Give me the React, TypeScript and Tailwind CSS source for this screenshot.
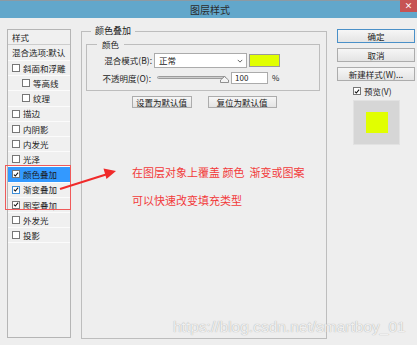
import React from 'react';

const CJK = "font-['Noto_Sans_CJK_SC','Noto_Sans',sans-serif]";

function Check({ checked, hover }: { checked?: boolean; hover?: boolean }) {
  return (
    <span
      className={`flex h-[8px] w-[8px] shrink-0 items-center justify-center border bg-white ${
        hover ? 'border-[#3c8ed8]' : 'border-[#767676]'
      }`}
    >
      {checked && (
        <svg viewBox="0 0 8 8" className="h-[7px] w-[7px]">
          <path d="M1.2 4.2 L3.1 6 L6.8 1.6" fill="none" stroke="#111" strokeWidth="1.4" />
        </svg>
      )}
    </span>
  );
}

const ROWS: { label: string; indent?: boolean; checked?: boolean; selected?: boolean; hover?: boolean }[] = [
  { label: '斜面和浮雕' },
  { label: '等高线', indent: true },
  { label: '纹理', indent: true },
  { label: '描边' },
  { label: '内阴影' },
  { label: '内发光' },
  { label: '光泽' },
  { label: '颜色叠加', checked: true, selected: true },
  { label: '渐变叠加', checked: true, hover: true },
  { label: '图案叠加', checked: true },
  { label: '外发光' },
  { label: '投影' },
];

function Btn({ children, w, primary }: { children: React.ReactNode; w: string; primary?: boolean }) {
  return (
    <div
      className={`flex items-center justify-center border bg-gradient-to-b from-[#f6f6f6] to-[#e4e4e4] text-[8.5px] leading-none text-[#222] ${w} ${
        primary ? 'border-[#4a90c8]' : 'border-[#acacac]'
      }`}
    >
      {children}
    </div>
  );
}

export default function App() {
  return (
    <div className={`relative h-[345px] w-[417px] overflow-hidden bg-[#eeeeee] text-[#1c1c1c] ${CJK}`}>
      {/* title bar */}
      <div className="relative flex h-[18px] items-center justify-center border-t border-[#8c9aa3] bg-[#62a7cb]">
        <span className="pl-[3px] text-[10px] leading-none text-[#2b2b2b]">图层样式</span>
        <div className="absolute right-0 top-[-1px] flex h-[12px] w-[17px] items-center justify-center bg-[#c75353] text-[8px] font-bold leading-none text-white">
          ×
        </div>
      </div>

      <div className="flex items-start pl-[7px] pt-[7px]">
        {/* left style list */}
        <div className="mt-[4px] flex h-[309px] w-[64px] flex-col border border-[#b5b5b5] bg-[#f0f0f0] text-[8.5px]">
          <div className="h-[15px] border-b border-[#cdcdcd] pl-[4px] leading-[14px]">样式</div>
          <div className="h-[16px] border-b border-[#fbfbfb] pl-[4px] leading-[15px]">混合选项:默认</div>
          {ROWS.map((r) => (
            <div
              key={r.label}
              className={`flex h-[15.2px] items-center gap-[3px] border-b border-[#fbfbfb] ${r.indent ? 'pl-[14px]' : 'pl-[4px]'} ${
                r.selected ? 'bg-[#3399ff]' : ''
              }`}
            >
              <Check checked={r.checked} hover={r.hover} />
              <span className="leading-none">{r.label}</span>
            </div>
          ))}
        </div>

        {/* main group */}
        <fieldset className="ml-[10px] h-[314px] w-[246px] border border-[#bdbdbd]">
          <legend className="ml-[9px] px-[4px] text-[9px] leading-[12px]">颜色叠加</legend>

          <fieldset className="ml-[4px] mr-[6px] mt-[1px] h-[53px] border border-[#bdbdbd]">
            <legend className="ml-[10px] px-[5px] text-[8.5px] leading-[12px]">颜色</legend>
            <div className="mt-[3px] flex h-[15px] items-center text-[8.5px]">
              <span className="w-[65px] text-right leading-none">混合模式(B):</span>
              <div className="ml-[2px] flex h-[15px] w-[93px] items-center justify-between border border-[#ababab] bg-white pl-[4px] pr-[3px]">
                <span className="leading-none">正常</span>
                <svg viewBox="0 0 8 5" className="h-[4px] w-[6px]">
                  <path d="M1 1 L4 4 L7 1" fill="none" stroke="#555" strokeWidth="1.2" />
                </svg>
              </div>
              <div className="ml-[2px] h-[13px] w-[31px] border border-[#9a9a9a] bg-[#e1ff00]" />
            </div>
            <div className="mt-[4px] flex h-[12px] items-center text-[8.5px]">
              <span className="w-[64px] text-right leading-none">不透明度(O):</span>
              <div className="relative ml-[6px] h-[12px] w-[72px]">
                <div className="absolute left-0 right-[3px] top-[4px] h-[3px] rounded-full border border-[#9c9c9c] bg-gradient-to-b from-[#b5b5b5] to-[#e8e8e8]" />
                <svg viewBox="0 0 9 7" className="absolute right-0 top-[4px] h-[7px] w-[9px]">
                  <path d="M4.5 0.5 L8.5 4 L8.5 6.5 L0.5 6.5 L0.5 4 Z" fill="#f4f4f4" stroke="#777" strokeWidth="0.8" />
                </svg>
              </div>
              <div className="ml-[2px] flex h-[12px] w-[37px] items-center border border-[#ababab] bg-white pl-[3px] text-[8px] leading-none">
                100
              </div>
              <span className="ml-[4px] text-[8px] leading-none">%</span>
            </div>
          </fieldset>

          <div className="mt-[5px] flex justify-center gap-[16px]">
            <Btn w="h-[12px] w-[60px]">设置为默认值</Btn>
            <Btn w="h-[12px] w-[69px]">复位为默认值</Btn>
          </div>
        </fieldset>

        {/* right column */}
        <div className="ml-[10px] mt-[4px] flex w-[78px] flex-col">
          <Btn w="h-[14px] w-[78px]" primary>
            确定
          </Btn>
          <div className="mt-[5px]">
            <Btn w="h-[14px] w-[78px]">取消</Btn>
          </div>
          <div className="mt-[5px]">
            <Btn w="h-[14px] w-[78px]">新建样式(W)...</Btn>
          </div>
          <div className="mt-[6px] flex items-center gap-[3px] pl-[16px] text-[8.5px]">
            <Check checked />
            <span className="leading-none">预览(V)</span>
          </div>
          <div className="ml-[16px] mt-[4px] flex h-[45px] w-[47px] items-center justify-center border border-[#e2e2e2] bg-[#d6d6d6]">
            <div className="h-[21px] w-[22px] bg-[#e1ff00]" />
          </div>
        </div>
      </div>

      {/* annotations */}
      <div className="pointer-events-none absolute left-[5px] top-[165px] h-[45px] w-[66px] border border-[#ef5a5a]" />
      <svg className="pointer-events-none absolute left-0 top-0" width="417" height="345">
        <line x1="60" y1="189" x2="106" y2="174.5" stroke="#f02a2a" strokeWidth="2" />
        <path d="M116 171 L103.5 168.5 L106.5 179 Z" fill="#f02a2a" />
      </svg>
      <div className="absolute left-[132px] top-[165px] text-[11px] leading-[15px] text-[#f23a3a]">
        <div className="whitespace-pre">在图层对象上覆盖 颜色  渐变或图案</div>
        <div className="mt-[13px]">可以快速改变填充类型</div>
      </div>
      <div className="absolute left-[173px] top-[317px] font-['Liberation_Sans',Arial,sans-serif] text-[15.5px] leading-[19px] text-[#f0f0f0] [text-shadow:0_0_1px_#9a9a9a]">
        https://blog.csdn.net/smartboy_01
      </div>
    </div>
  );
}
